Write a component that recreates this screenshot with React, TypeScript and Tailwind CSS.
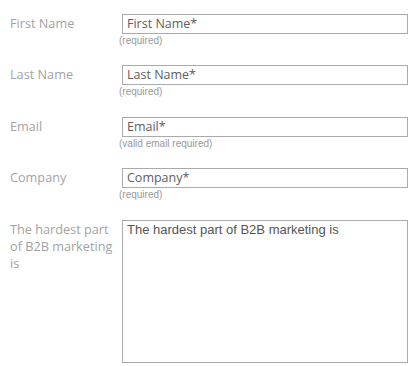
const fields = [
  { label: 'First Name', placeholder: 'First Name*', hint: '(required)', h: 'h-[51px]' },
  { label: 'Last Name', placeholder: 'Last Name*', hint: '(required)', h: 'h-[52px]' },
  { label: 'Email', placeholder: 'Email*', hint: '(valid email required)', h: 'h-[51px]' },
  { label: 'Company', placeholder: 'Company*', hint: '(required)', h: 'h-[52px]' },
];

export default function App() {
  return (
    <div className="w-[415px] h-[366px] bg-white overflow-hidden pt-[14px] font-['Open_Sans',sans-serif]">
      {fields.map((f) => (
        <div key={f.label} className={`flex ${f.h}`}>
          <label className="w-[122px] pl-[10px] h-[20px] flex items-center text-[12.7px] text-[#a3a3a3]">
            {f.label}
          </label>
          <div className="flex flex-col">
            <div className="w-[286px] h-[20px] border border-[#aaaaaa] flex items-center pl-[4px] text-[12.5px] font-medium text-[#5e5e5e]">
              {f.placeholder}
            </div>
            <span className="h-[12px] -ml-[3px] mt-[1px] text-[10px] leading-[12px] text-[#999999] font-['Liberation_Sans',sans-serif]">
              {f.hint}
            </span>
          </div>
        </div>
      ))}
      <div className="flex">
        <label className="w-[122px] pl-[10px] pr-[3px] pt-[1px] text-[12.7px] leading-[17px] text-[#a3a3a3]">
          The hardest part of B2B marketing is
        </label>
        <div className="w-[286px] h-[143px] border border-[#aaaaaa] px-[4px] pt-[1px] text-[13px] leading-[15px] text-[#555555] font-['Liberation_Sans',sans-serif]">
          The hardest part of B2B marketing is
        </div>
      </div>
    </div>
  );
}
